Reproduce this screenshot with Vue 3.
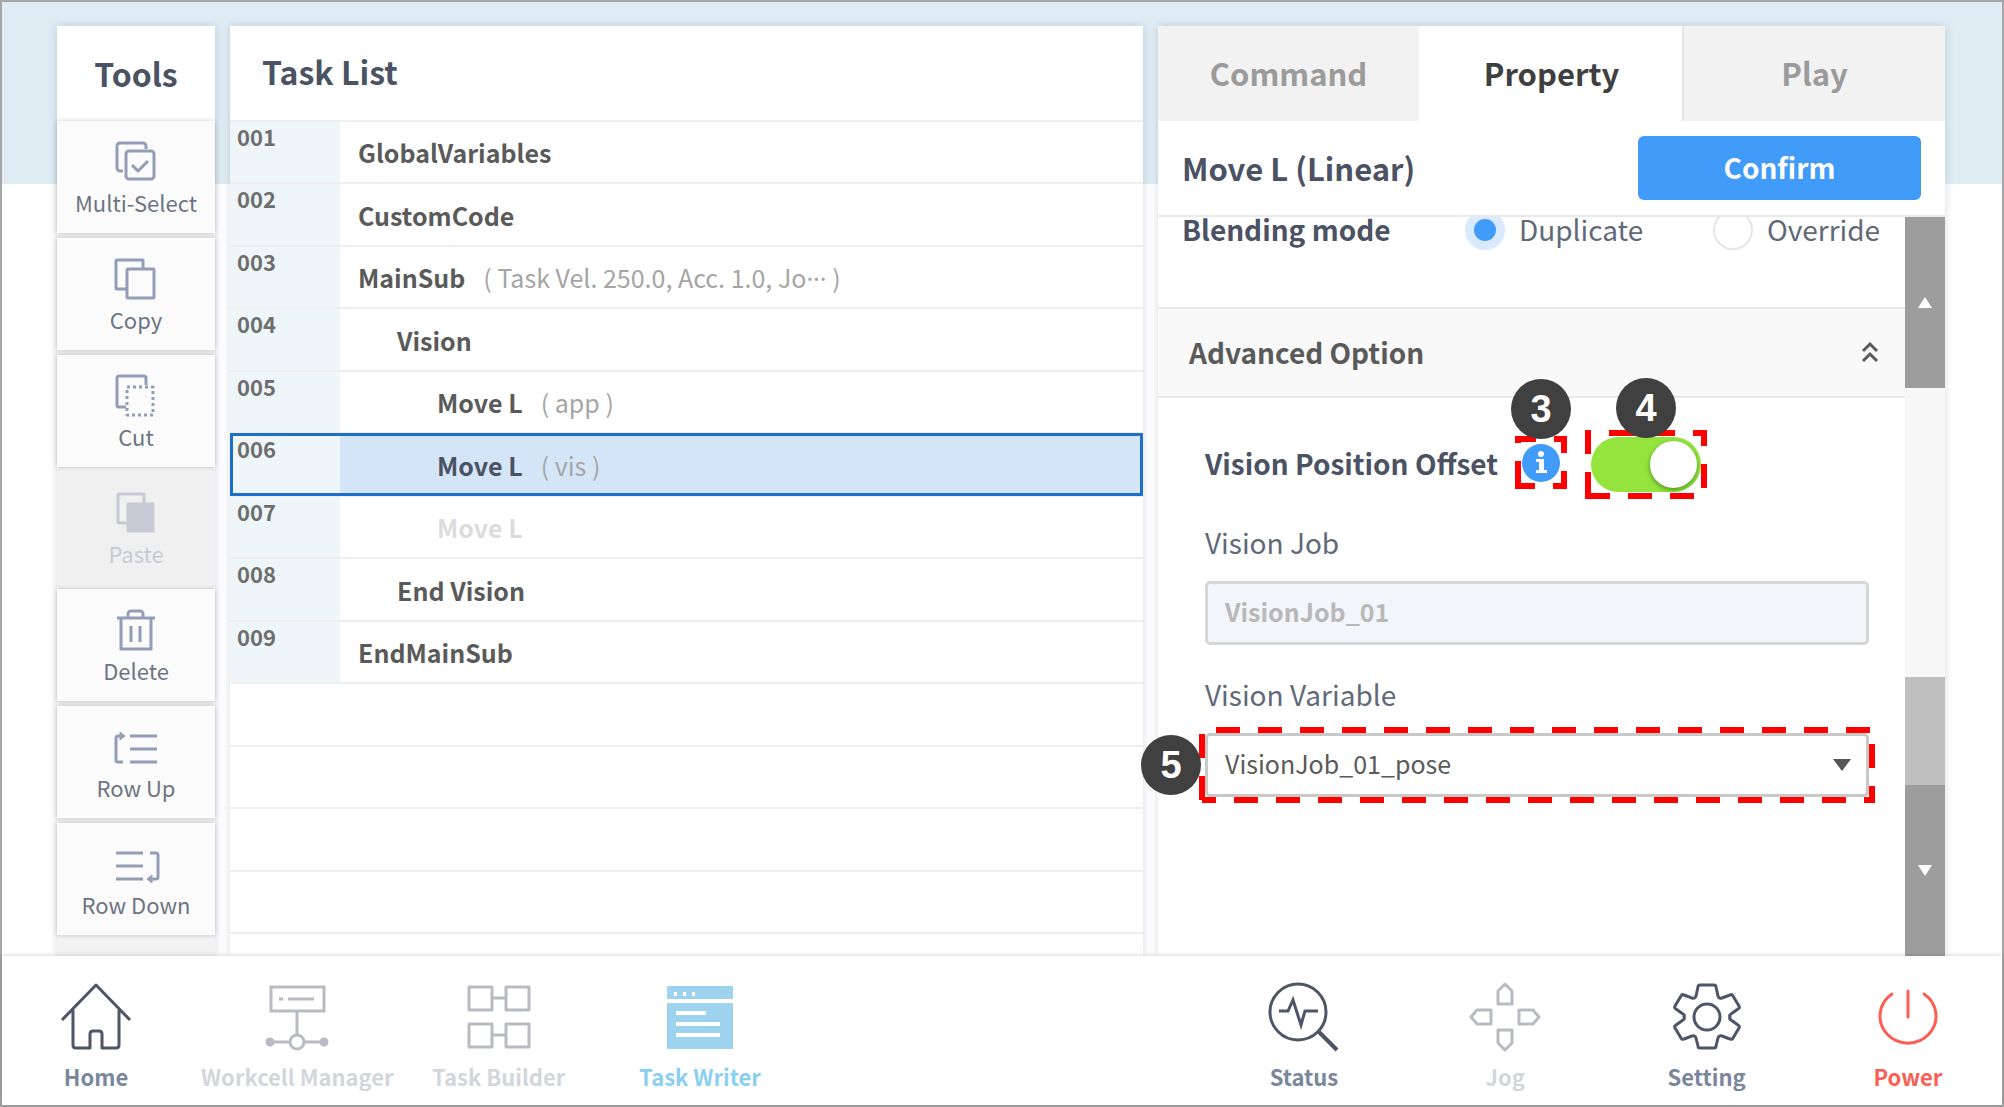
<script setup>
import { ref } from 'vue'

const tools = [
  { id: 'multi', label: 'Multi-Select' },
  { id: 'copy', label: 'Copy' },
  { id: 'cut', label: 'Cut' },
  { id: 'paste', label: 'Paste', disabled: true },
  { id: 'delete', label: 'Delete' },
  { id: 'up', label: 'Row Up' },
  { id: 'down', label: 'Row Down' }
]

const rows = [
  { no: '001', name: 'GlobalVariables', level: 0 },
  { no: '002', name: 'CustomCode', level: 0 },
  { no: '003', name: 'MainSub', level: 0, note: 'Task Vel. 250.0, Acc. 1.0, Jo', shortened: true },
  { no: '004', name: 'Vision', level: 1 },
  { no: '005', name: 'Move L', level: 2, note: 'app' },
  { no: '006', name: 'Move L', level: 2, note: 'vis', selected: true },
  { no: '007', name: 'Move L', level: 2, muted: true },
  { no: '008', name: 'End Vision', level: 1 },
  { no: '009', name: 'EndMainSub', level: 0 }
]

const tabs = ['Command', 'Property', 'Play']
const activeTab = ref('Property')
const blending = ref('duplicate')
const offsetOn = ref(true)
const visionVariable = ref('VisionJob_01_pose')
</script>

<template>
  <div class="app">
    <main class="workspace">
      <section class="tools">
        <h2 class="tools-title">Tools</h2>
        <button v-for="tool in tools" :key="tool.id" class="tool" type="button" :disabled="tool.disabled">
          <svg class="tool-icon" viewBox="0 0 44 44" fill="none" stroke="currentColor" stroke-width="3" stroke-linejoin="round" aria-hidden="true">
            <g v-if="tool.id === 'multi'">
              <path d="M9 31H6a3 3 0 0 1-3-3V6a3 3 0 0 1 3-3h23a3 3 0 0 1 3 3v3" />
              <rect x="12" y="11" width="28" height="28" rx="3" />
              <path d="M18 25l6 6 10-10" />
            </g>
            <g v-else-if="tool.id === 'copy'">
              <path d="M13 32H3a1 1 0 0 1-1-1V4a1 1 0 0 1 1-1h26v9" />
              <rect x="13" y="12" width="27" height="29" rx="1" />
            </g>
            <g v-else-if="tool.id === 'cut'">
              <path d="M12 33H5a2 2 0 0 1-2-2V4a2 2 0 0 1 2-2h25a2 2 0 0 1 2 2v7" />
              <rect x="13" y="13" width="26" height="28" stroke-dasharray="3 3" />
            </g>
            <g v-else-if="tool.id === 'paste'">
              <path d="M13 32H5a1 1 0 0 1-1-1V4a1 1 0 0 1 1-1h25v9" />
              <rect x="14" y="13" width="25" height="27" fill="currentColor" />
            </g>
            <g v-else-if="tool.id === 'delete'">
              <path d="M3 10h38M14 10V6a3 3 0 0 1 3-3h9a3 3 0 0 1 3 3v4M7 10v31h30V10M17 18v16M26 18v16" />
            </g>
            <g v-else-if="tool.id === 'up'">
              <path d="M9 37H4a2 2 0 0 1-2-2V13a2 2 0 0 1 2-2h5M16 11h27M16 24h27M16 37h27" />
              <path d="M6 7l5 4-5 4z" fill="currentColor" stroke-width="1" />
            </g>
            <g v-else>
              <path d="M2 11h27M2 24h27M2 37h27M36 11h6a2 2 0 0 1 2 2v22a2 2 0 0 1-2 2h-5" />
              <path d="M38 33l-5 4 5 4z" fill="currentColor" stroke-width="1" />
            </g>
          </svg>
          <span>{{ tool.label }}</span>
        </button>
      </section>

      <section class="tasks">
        <h2 class="tasks-title">Task List</h2>
        <table class="task-table">
          <tbody>
            <tr v-for="row in rows" :key="row.no" :class="{ selected: row.selected, muted: row.muted }">
              <td class="no">{{ row.no }}</td>
              <td :class="['name', 'level-' + row.level]">{{ row.name }}<span v-if="row.note" class="note">( {{ row.note }}<span v-if="row.shortened" class="dots">···</span> )</span></td>
            </tr>
            <tr v-for="n in 5" :key="n" class="blank"><td colspan="2"></td></tr>
          </tbody>
        </table>
      </section>

      <section class="panel">
        <div class="tabs" role="tablist">
          <button v-for="tab in tabs" :key="tab" type="button" role="tab" :aria-selected="tab === activeTab" :class="['tab', { active: tab === activeTab }]" @click="activeTab = tab">{{ tab }}</button>
        </div>
        <div class="panel-head">
          <h3>Move L (Linear)</h3>
          <button class="confirm" type="button">Confirm</button>
        </div>
        <div class="panel-view">
          <div class="panel-body">
            <div class="blending" role="radiogroup" aria-label="Blending mode">
              <span class="blending-title">Blending mode</span>
              <label class="choice"><input v-model="blending" type="radio" value="duplicate" />Duplicate</label>
              <label class="choice"><input v-model="blending" type="radio" value="override" />Override</label>
            </div>
            <button class="advanced" type="button">
              <span>Advanced Option</span>
              <svg class="chevrons" viewBox="0 0 18 22" fill="none" stroke="currentColor" stroke-width="3" aria-hidden="true"><path d="M2 10l7-7 7 7M2 20l7-7 7 7" /></svg>
            </button>
            <div class="options">
              <div class="offset">
                <label for="offset">Vision Position Offset</label>
                <div class="mark mark-info">
                  <svg class="outline" viewBox="0 0 52 53" aria-hidden="true"><path d="M3 7V3H21M39 3H49V17M49 35V50H38M20 50H3V25" /></svg>
                  <svg class="info" viewBox="0 0 38 38" aria-hidden="true"><circle cx="19" cy="19" r="19" fill="#409bf9" /><circle cx="19" cy="10" r="3" fill="#fff" /><path d="M14 15h8v11h3v3H14v-3h3v-8h-3z" fill="#fff" /></svg>
                  <span class="badge">3</span>
                </div>
                <div class="mark mark-switch">
                  <svg class="outline" viewBox="0 0 122 69" aria-hidden="true"><path d="M3 0V24M24 3H90M108 3H119V16M119 34V58M109 66H85M67 66H43M25 66H3V42" /></svg>
                  <input id="offset" v-model="offsetOn" class="switch" type="checkbox" role="switch" />
                  <span class="badge">4</span>
                </div>
              </div>
              <label class="field-label" for="job">Vision Job</label>
              <input id="job" class="field" type="text" value="VisionJob_01" disabled />
              <label class="field-label" for="variable">Vision Variable</label>
              <div class="select-wrap">
                <select id="variable" v-model="visionVariable" class="field">
                  <option>VisionJob_01_pose</option>
                </select>
                <svg class="caret" viewBox="0 0 18 12" aria-hidden="true"><path d="M0 0h18L9 12z" fill="#555" /></svg>
                <svg class="select-outline" aria-hidden="true">
                  <line x1="17" y1="3" x2="100%" y2="3" stroke-dasharray="24 18" />
                  <line x1="3" y1="7" x2="3" y2="100%" stroke-dasharray="24 18" />
                  <line x1="3" y1="73" x2="100%" y2="73" stroke-dasharray="24 18" stroke-dashoffset="10" />
                  <svg x="100%" width="6" height="76" overflow="visible"><line x1="-3" y1="17" x2="-3" y2="76" stroke-dasharray="24 18" /></svg>
                </svg>
                <span class="badge badge-select">5</span>
              </div>
            </div>
          </div>
          <div class="scroller">
            <button class="scroll-up" type="button" aria-label="Scroll up"></button>
            <div class="scroll-track"></div>
            <div class="scroll-thumb"></div>
            <button class="scroll-down" type="button" aria-label="Scroll down"></button>
          </div>
        </div>
      </section>
    </main>

    <nav class="dock">
      <a href="#home">
        <svg viewBox="0 0 72 72" fill="none" stroke="currentColor" stroke-width="3" stroke-linejoin="round" aria-hidden="true"><path d="M2 38L36 3l34 35M13 28v35q0 3 3 3h14V52q0-3 3-3h6q3 0 3 3v14h14q3 0 3-3V28" /></svg>
        <span>Home</span>
      </a>
      <a href="#workcell" class="off">
        <svg viewBox="0 0 72 72" fill="none" stroke="currentColor" stroke-width="3" aria-hidden="true"><rect x="10" y="5" width="53" height="24" /><path d="M18 17h4M27 17h26M36 29v24M8 60h21M43 60h21" /><circle cx="36" cy="60" r="7" /><circle cx="9" cy="60" r="3" fill="currentColor" /><circle cx="63" cy="60" r="3" fill="currentColor" /></svg>
        <span>Workcell Manager</span>
      </a>
      <a href="#builder" class="off">
        <svg viewBox="0 0 72 72" fill="none" stroke="currentColor" stroke-width="3" stroke-linejoin="round" aria-hidden="true"><rect x="6" y="5" width="23" height="23" /><rect x="43" y="5" width="23" height="23" /><rect x="6" y="42" width="23" height="23" /><rect x="43" y="42" width="23" height="23" /><path d="M29 16h14M29 53h14" /></svg>
        <span>Task Builder</span>
      </a>
      <a href="#writer" class="current">
        <svg viewBox="0 0 72 72" aria-hidden="true"><path d="M3 4h66v13H3zM3 21h66v46H3z" fill="#9dd3ee" /><path d="M10 12h3M19 12h3M28 12h3M12 31h30M12 42h44M12 53h44" fill="none" stroke="#fff" stroke-width="4" /></svg>
        <span>Task Writer</span>
      </a>
      <i class="space"></i>
      <i class="space"></i>
      <a href="#status">
        <svg viewBox="0 0 72 72" fill="none" stroke="currentColor" stroke-width="3" aria-hidden="true"><circle cx="30" cy="30" r="28" /><path d="M50 49l19 19" stroke-width="4" /><path d="M11 29h9l5-11 8 25 4-14h13" /></svg>
        <span>Status</span>
      </a>
      <a href="#jog" class="off">
        <svg viewBox="0 0 72 72" fill="none" stroke="currentColor" stroke-width="3" stroke-linejoin="round" aria-hidden="true"><path d="M29 22V9l7-7 7 7v13zM29 48v13l7 7 7-7V48zM22 28H8l-6 7 6 7h14zM50 28h14l6 7-6 7H50z" /></svg>
        <span>Jog</span>
      </a>
      <a href="#setting">
        <svg viewBox="0 0 72 72" fill="none" stroke="currentColor" stroke-width="3" stroke-linejoin="round" aria-hidden="true"><path d="M29 3h14q2 0 2 2l2 9q1 3 4 2l8-3q2-1 3 1l6 10q1 2-1 3l-7 5q-2 1-1 3-1 2 1 3l7 5q2 1 1 3l-6 10q-1 2-3 1l-8-3q-3-1-4 2l-2 8q0 2-2 2H29q-2 0-2-2l-2-8q-1-3-4-2l-8 3q-2 1-3-1L4 46q-1-2 1-3l7-5q2-1 1-3 1-2-1-3l-7-5q-2-1-1-3l6-10q1-2 3-1l8 3q3 1 4-2l2-9q0-2 2-2z" /><circle cx="36" cy="35" r="13" /></svg>
        <span>Setting</span>
      </a>
      <a href="#power" class="power">
        <svg viewBox="0 0 72 72" fill="none" stroke="currentColor" stroke-width="3" stroke-linecap="round" aria-hidden="true"><path d="M20 12a28 27 0 1 0 32 0M36 9v26" /></svg>
        <span>Power</span>
      </a>
    </nav>
  </div>
</template>

<style>
body {
  margin: 0;
}
</style>

<style scoped>
* {
  box-sizing: border-box;
}

.app {
  display: flex;
  flex-direction: column;
  min-height: 100vh;
  border: 2px solid #a6a6a6;
  background: linear-gradient(#dfecf4 0 182px, #fff 182px);
  font-family: "Noto Sans CJK KR", "Noto Sans", sans-serif;
  color: #4a5263;
}

button,
input,
select {
  font: inherit;
  color: inherit;
}

h2,
h3 {
  margin: 0;
  font-size: 32px;
  line-height: 40px;
  font-weight: 700;
}

.workspace {
  flex: 1;
  display: grid;
  grid-template-columns: 158px minmax(0, 913fr) minmax(0, 787fr);
  gap: 15px;
  padding: 24px 57px 0 55px;
}

.tools,
.tasks,
.panel {
  background: #fff;
  box-shadow: 0 0 8px rgba(90, 110, 130, 0.25);
}

.tools {
  display: flex;
  flex-direction: column;
  background: #f2f2f2;
}

.tools-title {
  height: 95px;
  padding-top: 27px;
  text-align: center;
  background: #fff;
}

.tool {
  display: flex;
  flex-direction: column;
  align-items: center;
  width: 100%;
  height: 112px;
  margin-bottom: 5px;
  padding: 19px 0 0;
  border: 0;
  background: #fbfbfb;
  box-shadow: 0 0 5px rgba(0, 0, 0, 0.2);
  font-size: 22px;
  line-height: 32px;
  color: #6d7483;
  white-space: nowrap;
}

.tool:disabled {
  background: #f0f0f0;
  box-shadow: none;
  color: #c7cad4;
}

.tool-icon {
  width: 44px;
  height: 44px;
  margin-bottom: 2px;
  color: #949db7;
  overflow: visible;
}

.tool:disabled .tool-icon {
  color: #c7cad4;
}

.tasks-title {
  height: 94px;
  padding: 25px 32px 0;
}

.task-table {
  width: 100%;
  table-layout: fixed;
  border-collapse: collapse;
}

.task-table tr {
  border-top: 2px solid #efefef;
}

.task-table td {
  height: 62px;
  padding: 0;
}

.task-table tr:nth-child(even) td {
  height: 63px;
}

.task-table .blank:last-child td {
  height: 20px;
}

.task-table .no {
  width: 110px;
  padding: 0 0 0 7px;
  vertical-align: top;
  background: #eef6fa;
  font-size: 22px;
  line-height: 28px;
  font-weight: 700;
  color: #6e6e6e;
}

.task-table .name {
  padding: 0 0 0 18px;
  font-size: 25px;
  line-height: 36px;
  font-weight: 700;
  color: #5a5a5a;
  white-space: nowrap;
}

.task-table .level-1 {
  padding-left: 57px;
}

.task-table .level-2 {
  padding-left: 97px;
}

.note {
  margin-left: 18px;
  font-weight: 400;
  color: #a5a5a5;
}

.dots {
  font-family: "Noto Sans", sans-serif;
}

.task-table .muted .name {
  color: #dcdcdc;
}

.task-table .selected {
  outline: 3px solid #1c6fcb;
  outline-offset: -3px;
}

.task-table .selected .name {
  background: #d5e5f8;
  color: #4a5263;
}

.panel {
  display: flex;
  flex-direction: column;
}

.tabs {
  display: flex;
}

.tab {
  flex: 1;
  height: 95px;
  padding: 0 0 2px;
  border: 0;
  background: #f2f2f2;
  font-size: 31px;
  line-height: 40px;
  font-weight: 700;
  color: #9b9b9b;
}

.tab + .tab {
  border-left: 2px solid #e6e6e6;
}

.tabs .tab.active {
  border-color: #fff;
  background: #fff;
  color: #3f3f3f;
}

.panel-head {
  position: relative;
  z-index: 1;
  display: flex;
  align-items: center;
  justify-content: space-between;
  height: 96px;
  padding: 0 24px;
  border-bottom: 2px solid #e9e9e9;
  background: #fff;
}

.confirm {
  width: 283px;
  height: 64px;
  padding: 0 0 2px;
  border: 0;
  border-radius: 6px;
  background: #409bf9;
  font-size: 28px;
  line-height: 40px;
  font-weight: 700;
  color: #fff;
}

.panel-head h3 {
  font-size: 31px;
}

.panel-view {
  flex: 1;
  display: flex;
}

.panel-body {
  flex: 1;
  min-width: 0;
}

.blending {
  display: flex;
  height: 92px;
  padding-left: 24px;
  border-bottom: 2px solid #e9e9e9;
  font-size: 28px;
  line-height: 24px;
  white-space: nowrap;
}

.blending-title {
  width: 283px;
  font-weight: 700;
}

.choice {
  display: flex;
  gap: 14px;
  width: 248px;
  color: #616979;
}

.choice:last-child {
  width: auto;
}

.choice input {
  flex: none;
  appearance: none;
  width: 40px;
  height: 40px;
  margin: -7px 0 0;
  border: 2px solid #e6e6e6;
  border-radius: 50%;
  background: #fff;
}

.choice input:checked {
  border: 9px solid #d9eafe;
  background: #409bf9;
}

.advanced {
  display: flex;
  align-items: center;
  justify-content: space-between;
  width: 100%;
  height: 89px;
  padding: 0 26px 2px 31px;
  border: 0;
  border-bottom: 2px solid #e9e9e9;
  background: #f9f9f9;
  font-size: 28px;
  line-height: 40px;
  font-weight: 700;
  color: #5a5a5a;
}

.chevrons {
  width: 18px;
  height: 22px;
}

.options {
  display: flex;
  flex-direction: column;
  padding: 32px 36px 0 47px;
}

.offset {
  display: flex;
  align-items: center;
  height: 69px;
  font-size: 28px;
  font-weight: 700;
  white-space: nowrap;
}

.offset label {
  padding-bottom: 4px;
}

.mark {
  position: relative;
  display: flex;
  align-items: center;
  justify-content: center;
}

.mark-info {
  width: 52px;
  height: 53px;
  margin: 0 0 4px 17px;
}

.mark-switch {
  width: 122px;
  height: 69px;
  margin-left: 18px;
}

.outline,
.select-outline {
  position: absolute;
  inset: 0;
  width: 100%;
  height: 100%;
  fill: none;
  stroke: #f00;
  stroke-width: 6px;
  pointer-events: none;
}

.info {
  width: 38px;
  height: 38px;
}

.switch {
  appearance: none;
  display: flex;
  align-items: center;
  width: 110px;
  height: 55px;
  margin: 0;
  border-radius: 28px;
  background: #ccc;
}

.switch::before {
  content: "";
  width: 47px;
  height: 47px;
  margin: 0 4px;
  border-radius: 50%;
  background: #fff;
  box-shadow: 0 2px 5px rgba(0, 70, 0, 0.5);
}

.switch:checked {
  justify-content: flex-end;
  background: #95e43e;
}

.badge {
  position: absolute;
  left: 50%;
  bottom: 100%;
  display: flex;
  align-items: center;
  justify-content: center;
  width: 60px;
  height: 60px;
  margin: 0 0 -3px -30px;
  border-radius: 50%;
  background: #404040;
  font-family: "Liberation Sans", Arial, sans-serif;
  font-size: 38px;
  font-weight: 700;
  color: #fff;
}

.mark-switch .badge {
  margin-bottom: -8px;
}

.field-label {
  margin-top: 23px;
  font-size: 28px;
  line-height: 40px;
  color: #616979;
}

.field {
  width: 100%;
  height: 64px;
  margin-top: 19px;
  padding: 0 17px 4px;
  border: 3px solid #d4d6d8;
  border-radius: 5px;
  background: #f2f6fa;
  font-size: 25px;
  font-weight: 700;
  color: #b8b8b8;
}

.field + .field-label {
  margin-top: 29px;
}

.select-wrap {
  position: relative;
}

select.field {
  appearance: none;
  border-color: #c8c8c8;
  background: #fff;
  font-weight: 400;
  color: #5a5a5a;
}

.caret {
  position: absolute;
  right: 18px;
  top: 45px;
  width: 18px;
  height: 12px;
}

.select-outline {
  inset: 13px -6px 0 -6px;
  width: calc(100% + 12px);
  height: 76px;
}

.badge-select {
  left: -34px;
  top: 21px;
  bottom: auto;
}

.scroller {
  display: flex;
  flex-direction: column;
  width: 40px;
}

.scroll-up,
.scroll-down {
  display: flex;
  align-items: center;
  justify-content: center;
  width: 100%;
  height: 171px;
  padding: 0;
  border: 0;
  background: #9d9d9d;
}

.scroll-up::before,
.scroll-down::before {
  content: "";
  border: 7px solid transparent;
  border-top-width: 0;
  border-bottom: 11px solid #fff;
}

.scroll-down::before {
  border-top: 11px solid #fff;
  border-bottom-width: 0;
}

.scroll-track {
  flex: 1;
  background: #f7f7f7;
}

.scroll-thumb {
  height: 108px;
  background: #bfbfbf;
}

.dock {
  position: relative;
  display: flex;
  justify-content: space-between;
  height: 149px;
  padding: 26px 0 0;
  background: #fff;
  box-shadow: 0 0 5px rgba(0, 0, 0, 0.2);
}

.dock a,
.space {
  display: flex;
  flex-direction: column;
  align-items: center;
  width: 188px;
  font-size: 22px;
  line-height: 32px;
  font-weight: 700;
  color: #7a869c;
  text-decoration: none;
  white-space: nowrap;
}

.dock svg {
  width: 72px;
  height: 72px;
  margin-bottom: 6px;
  color: #4e5566;
}

.dock .off {
  color: #d3d6dd;
}

.dock .off svg {
  color: #b9bbc3;
}

.dock .current {
  color: #8bcff0;
}

.dock .power,
.dock .power svg {
  color: #fb5e52;
}
</style>
